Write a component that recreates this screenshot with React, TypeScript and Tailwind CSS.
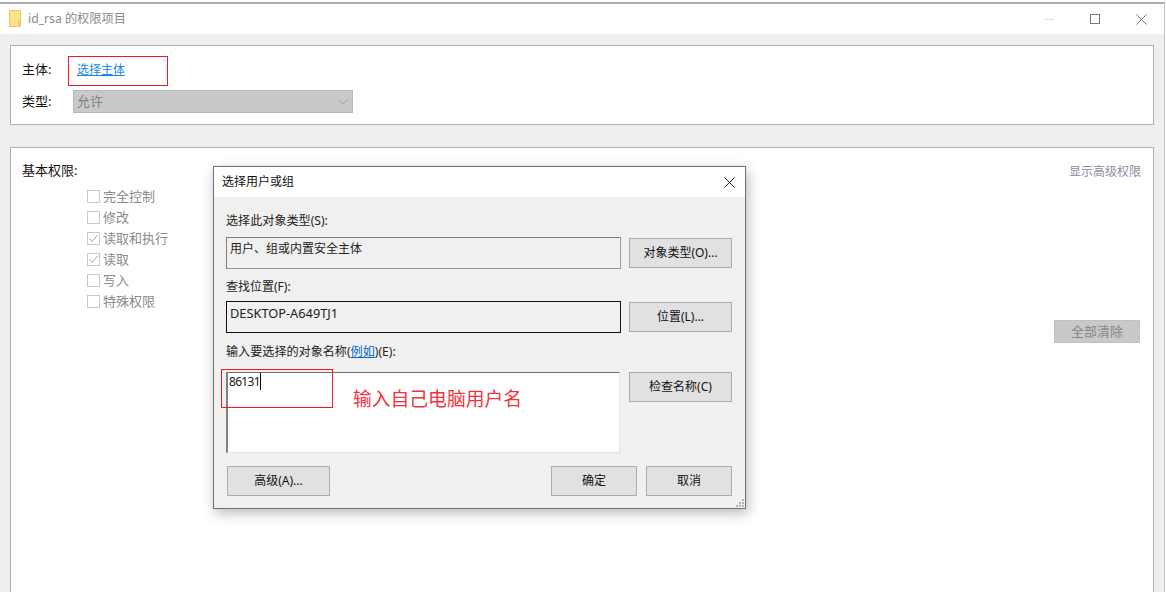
const font = "font-['Noto_Sans','Noto_Sans_CJK_SC',sans-serif]";

const permissions = [
  { name: "完全控制", checked: false },
  { name: "修改", checked: false },
  { name: "读取和执行", checked: true },
  { name: "读取", checked: true },
  { name: "写入", checked: false },
  { name: "特殊权限", checked: false },
];

function CloseIcon({ className }: { className: string }) {
  return (
    <svg width="11" height="11" viewBox="0 0 11 11" className={className}>
      <path d="M0.5 0.5 L10.5 10.5 M10.5 0.5 L0.5 10.5" stroke="currentColor" strokeWidth="1" fill="none" />
    </svg>
  );
}

function DialogButton({ label, className }: { label: string; className: string }) {
  return (
    <button className={`h-[30px] shrink-0 border border-[#adadad] bg-[#e1e1e1] text-[12px] text-[#111] ${className}`}>
      {label}
    </button>
  );
}

function PickerDialog() {
  return (
    <div className="absolute left-[213px] top-[166px] z-10 flex h-[343px] w-[533px] flex-col border border-[#6f6f6f] bg-[#f0f0f0] shadow-[2px_4px_12px_rgba(0,0,0,0.28)]">
      <div className="flex h-[30px] shrink-0 items-center justify-between bg-white pl-[8px] pr-[10px] text-[12px] text-[#111]">
        <span>选择用户或组</span>
        <CloseIcon className="text-[#222]" />
      </div>
      <div className="relative flex-1 pl-[12px] pr-[13px]">
        <div className="mt-[15px] h-[16px] text-[12.1px] leading-[18px] text-[#222]">选择此对象类型(S):</div>
        <div className="mt-[9px] flex items-center gap-[8px]">
          <div className="h-[32px] w-[395px] border border-[#7d7d7d] border-r-[#999] border-b-[#999] px-[3px] text-[12px] leading-[22px] text-[#222]">
            用户、组或内置安全主体
          </div>
          <DialogButton label="对象类型(O)..." className="w-[103px]" />
        </div>
        <div className="mt-[9px] h-[16px] text-[12px] leading-[18px] text-[#222]">查找位置(F):</div>
        <div className="mt-[7px] flex items-center gap-[8px]">
          <div className="h-[32px] w-[395px] border border-[#111] px-[3px] text-[12.8px] leading-[22px] text-[#222]">
            DESKTOP-A649TJ1
          </div>
          <DialogButton label="位置(L)..." className="w-[103px]" />
        </div>
        <div className="mt-[10px] h-[16px] text-[12.1px] leading-[18px] text-[#222]">
          输入要选择的对象名称(<span className="text-[#0066cc] underline">例如</span>)(E):
        </div>
        <div className="mt-[13px] flex items-start gap-[9px]">
          <div className="h-[81px] w-[394px] border border-[#e3e3e3] border-l-2 border-l-[#808080] border-t-[#6f6f6f] bg-white px-[1px] pt-[1px] text-[12px] leading-[16px] tracking-[-0.7px] text-[#222]">
            <span className="border-r border-black">86131</span>
          </div>
          <DialogButton label="检查名称(C)" className="w-[103px]" />
        </div>
        <div className="mt-[13px] flex justify-between pl-px">
          <DialogButton label="高级(A)..." className="w-[103px]" />
          <div className="flex gap-[9px]">
            <DialogButton label="确定" className="w-[86px]" />
            <DialogButton label="取消" className="w-[86px]" />
          </div>
        </div>
        <svg width="10" height="10" viewBox="0 0 10 10" className="absolute bottom-0 right-0 text-[#b5b5b5]">
          <path d="M7 1h2v2H7zM4 4h2v2H4zM7 4h2v2H7zM1 7h2v2H1zM4 7h2v2H4zM7 7h2v2H7z" fill="currentColor" />
        </svg>
      </div>
    </div>
  );
}

export default function App() {
  return (
    <div className={`relative h-[592px] w-[1166px] overflow-hidden bg-white pt-[2px] ${font}`}>
      <div className="flex h-[590px] w-[1165px] flex-col border-r border-t-2 border-[#ababab] border-r-[#c4c4c4] bg-[#efefef]">
        <div className="flex h-[30px] shrink-0 items-center justify-between bg-white pl-[9px]">
          <div className="flex items-center gap-[7px] text-[12.2px] text-[#8a8a8a]">
            <svg width="12" height="17" viewBox="0 0 12 17">
              <path d="M0.5 0.5H11.5V16.5H0.5Z" fill="#fde28e" stroke="#eec65a" />
              <path d="M9 11.5H11.5V16.5H9Z" fill="#f2cd66" />
            </svg>
            <span>id_rsa 的权限项目</span>
          </div>
          <div className="flex text-[#777]">
            <div className="flex h-[30px] w-[46px] items-center justify-center">
              <div className="h-px w-[10px] bg-[#ddd]" />
            </div>
            <div className="flex h-[30px] w-[46px] items-center justify-center">
              <div className="h-[10px] w-[10px] border border-[#777]" />
            </div>
            <div className="flex h-[30px] w-[46px] items-center justify-center">
              <CloseIcon className="text-[#777]" />
            </div>
          </div>
        </div>

        <div className="flex flex-1 flex-col pl-[10px] pr-[10px] pt-[11px]">
          <div className="flex h-[80px] shrink-0 flex-col border border-[#b0b0b0] bg-white pl-[11px] text-[13px] text-[#111]">
            <div className="mt-[16px] flex h-[16px] items-center">
              <span className="w-[55px]">主体:</span>
              <a className="text-[12px] text-[#1a86e8] underline">选择主体</a>
            </div>
            <div className="mt-[12px] flex items-center">
              <span className="w-[51px]">类型:</span>
              <div className="flex h-[23px] w-[280px] items-center justify-between border border-[#b8b8b8] bg-[#c9c9c9] pl-[3px] pr-[4px] text-[#808080]">
                <span>允许</span>
                <svg width="10" height="6" viewBox="0 0 10 6" className="text-[#a4a4a4]">
                  <path d="M0.5 0.5 L5 5 L9.5 0.5" stroke="currentColor" fill="none" />
                </svg>
              </div>
            </div>
          </div>

          <div className="mt-[22px] flex flex-1 justify-between border border-b-0 border-[#b0b0b0] bg-white pl-[11px] pr-[12px] text-[13px]">
            <div className="pt-[14px]">
              <div className="h-[16px] leading-[16px] text-[#111]">基本权限:</div>
              <div className="ml-[65px] mt-[8px] flex flex-col">
                {permissions.map((p) => (
                  <div key={p.name} className="flex h-[21px] items-center gap-[3px] text-[#8a8a8a]">
                    <div className="flex h-[13px] w-[13px] items-center justify-center border border-[#c8c8c8]">
                      {p.checked && (
                        <svg width="11" height="11" viewBox="0 0 11 11">
                          <path d="M1.5 5.5 L4.2 8.5 L9.5 2" stroke="#a8a8a8" strokeWidth="1" fill="none" />
                        </svg>
                      )}
                    </div>
                    <span>{p.name}</span>
                  </div>
                ))}
              </div>
            </div>
            <div className="flex flex-col items-end pt-[16px]">
              <div className="h-[16px] text-[12px] leading-[16px] text-[#8d8d9c]">显示高级权限</div>
              <button className="mr-px mt-[140px] h-[23px] w-[86px] border border-[#c0c0c0] bg-[#c9c9c9] text-[#888]">
                全部清除
              </button>
            </div>
          </div>
        </div>
      </div>

      <PickerDialog />

      {/* annotations drawn on top of the screenshot */}
      <div className="absolute left-[68px] top-[56px] z-20 h-[30px] w-[100px] border border-[#ed1c24]" />
      <div className="absolute left-[221px] top-[369px] z-20 h-[39px] w-[112px] border border-[#ed1c24]" />
      <div className="absolute left-[353px] top-[386px] z-20 text-[18.8px] leading-[26px] text-[#f0323c]">
        输入自己电脑用户名
      </div>
    </div>
  );
}
